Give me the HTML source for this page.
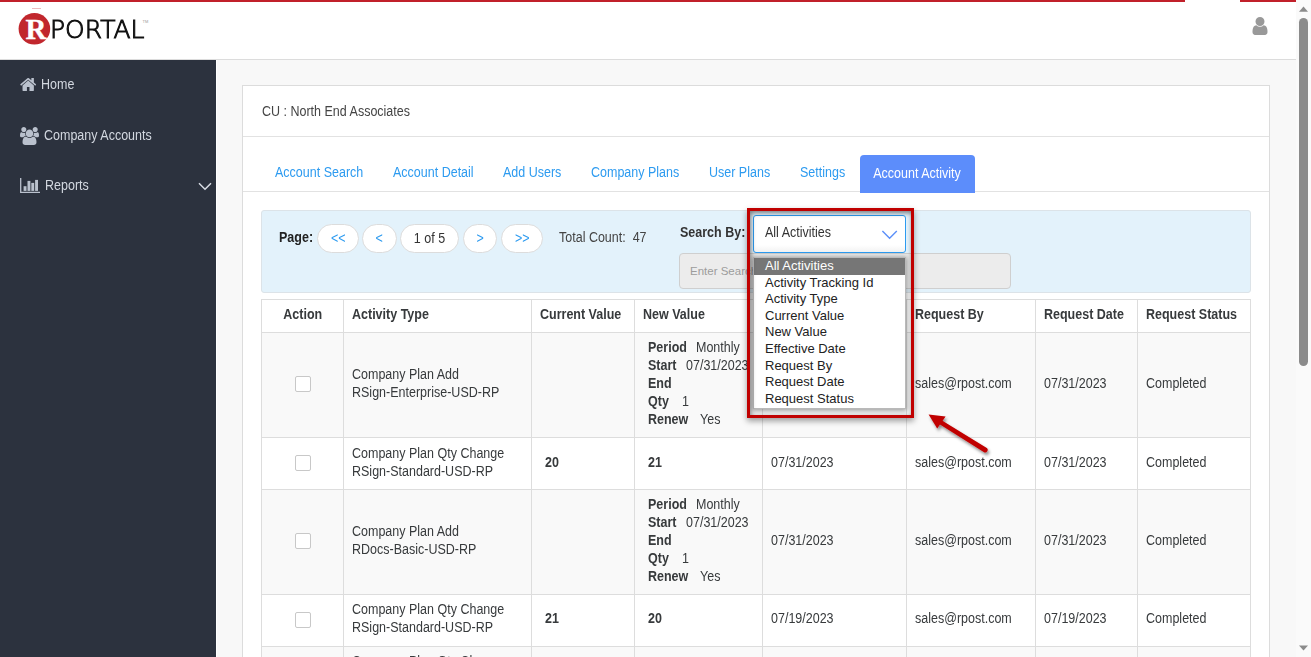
<!DOCTYPE html>
<html lang="en">
<head>
<meta charset="utf-8">
<title>RPortal - Account Activity</title>
<style>
*{box-sizing:border-box;margin:0;padding:0}
html,body{width:1311px;height:657px;overflow:hidden;background:#f8f8f8;font-family:"Liberation Sans",sans-serif;font-size:14px;color:#373a3c}
body{position:relative}
.abs{position:absolute}
.t{display:inline-block;white-space:nowrap;transform:scaleX(.893);transform-origin:0 50%}
.tc{display:inline-block;white-space:nowrap;transform:scaleX(.893);transform-origin:50% 50%}
b,th{font-weight:bold}
#header{left:0;top:0;width:1296px;height:60px;background:#fff;border-bottom:1px solid #dcdcdc}
#redline1{left:0;top:0;width:1185px;height:2px;background:#c1202a}
#redline2{left:1240px;top:0;width:56px;height:2px;background:#c1202a}
#sidebar{left:0;top:60px;width:216px;height:597px;background:#2c323e}
#scroll{left:1296px;top:0;width:15px;height:657px;background:#fafafa}
#thumb{left:1299px;top:18px;width:9px;height:348px;border-radius:5px;background:#8b8b8b}
.nav{position:absolute;height:20px;line-height:20px;color:#d3d8e0;font-size:14px}
#card{left:242px;top:85px;width:1028px;height:600px;background:#fff;border:1px solid #dcdcdc}
#cardtitle{left:262px;top:101px;height:20px;line-height:20px;color:#444}
#titlesep{left:243px;top:136px;width:1026px;height:1px;background:#e2e2e2}
#tabsep{left:243px;top:191px;width:1026px;height:1px;background:#e2e2e2}
.tab{position:absolute;top:162px;height:20px;line-height:20px;color:#2d9bf0}
#activetab{left:860px;top:155px;width:115px;height:38px;background:#5c8dfb;border-radius:4px 4px 0 0;color:#fff;text-align:center;line-height:37px}
#filter{left:261px;top:210px;width:990px;height:83px;background:#e3f2fb;border:1px solid #dce3e8;border-radius:3px}
.pill{position:absolute;top:224px;height:29px;border:1px solid #dcdcdc;border-radius:15px;background:#fff;text-align:center;line-height:26px;color:#2d9bf0}
#search{left:679px;top:253px;width:332px;height:36px;background:#ececec;border:1px solid #cfcfcf;border-radius:4px;color:#9c9c9c;font-size:11.5px;line-height:34px;padding-left:10px}
table{position:absolute;left:261px;top:299px;width:989px;border-collapse:collapse;table-layout:fixed}
th,td{border:1px solid #ddd;padding:0 0 4px 8px;text-align:left;vertical-align:middle;line-height:18px;overflow:hidden}
th{color:#373a3c}
tr.odd td{background:#f9f9f9}
tr.even td{background:#fff}
tr.up td{padding-bottom:6px}
tr.up td.c{padding-bottom:4px}
td.c,th.c{text-align:center;padding:0 0 4px 0}
.cb{display:inline-block;width:16px;height:16px;border:1px solid #c8c8c8;border-radius:2px;background:#fff;vertical-align:middle}
.nv{padding-left:13px}
.nv i{font-style:normal;display:inline-block}
#select{left:753px;top:215px;width:153px;height:38px;background:linear-gradient(#fff 0,#fff 80%,#f3f3f3 100%);border:1px solid #2d9bf0;border-radius:3px;line-height:33px;padding-left:11px;color:#333}
#list{left:753px;top:257px;width:153px;height:152px;background:#fff;border:1px solid #b9b9b9;box-shadow:0 1px 5px 1px rgba(0,0,0,.36);font-size:13px;color:#222}
#list div{height:16.6px;line-height:16.6px;padding-left:11px;white-space:nowrap}
#list div.sel{background:#767676;color:#fff}
#redbox{left:747px;top:208px;width:167px;height:210px;border:3px solid #c00000;box-shadow:0 3px 6px rgba(0,0,0,.38),inset 1px 2px 5px rgba(0,0,0,.5)}
</style>
</head>
<body>
<div class="abs" id="header"></div>
<div class="abs" id="redline1"></div>
<div class="abs" id="redline2"></div>
<div class="abs" style="left:32px;top:8px;width:9px;height:1px;background:#c1202a;opacity:.3"></div>
<div class="abs" id="sidebar"></div>
<div class="abs" style="left:216px;top:60px;width:1px;height:597px;background:#fff"></div>
<div class="abs" id="card"></div>
<div class="abs" id="cardtitle"><span class="t">CU : North End Associates</span></div>
<div class="abs" id="titlesep"></div>
<div class="abs" id="tabsep"></div>
<div class="tab" style="left:275px"><span class="t">Account Search</span></div>
<div class="tab" style="left:393px"><span class="t">Account Detail</span></div>
<div class="tab" style="left:503px"><span class="t">Add Users</span></div>
<div class="tab" style="left:591px"><span class="t">Company Plans</span></div>
<div class="tab" style="left:709px"><span class="t">User Plans</span></div>
<div class="tab" style="left:800px"><span class="t">Settings</span></div>
<div class="abs" id="activetab"><span class="tc">Account Activity</span></div>
<div class="abs" id="filter"></div>
<div class="abs" style="left:279px;top:227px;height:20px;line-height:20px;color:#222"><b class="t">Page:</b></div>
<div class="pill" style="left:317px;width:42px"><span class="tc">&lt;&lt;</span></div>
<div class="pill" style="left:362px;width:35px"><span class="tc">&lt;</span></div>
<div class="pill" style="left:400px;width:59px;color:#333"><span class="tc">1 of 5</span></div>
<div class="pill" style="left:463px;width:34px"><span class="tc">&gt;</span></div>
<div class="pill" style="left:501px;width:42px"><span class="tc">&gt;&gt;</span></div>
<div class="abs" style="left:559px;top:227px;height:20px;line-height:20px;color:#444"><span class="t">Total Count:&nbsp; 47</span></div>
<div class="abs" style="left:680px;top:222px;height:20px;line-height:20px;color:#333"><b class="t">Search By:</b></div>
<div class="abs" id="search">Enter Search...</div>
<table>
<colgroup><col style="width:82px"><col style="width:188px"><col style="width:103px"><col style="width:128px"><col style="width:144px"><col style="width:129px"><col style="width:102px"><col style="width:113px"></colgroup>
<thead><tr style="height:33px"><th class="c"><span class="tc">Action</span></th><th><span class="t">Activity Type</span></th><th><span class="t">Current Value</span></th><th><span class="t">New Value</span></th><th><span class="t">Effective Date</span></th><th><span class="t">Request By</span></th><th><span class="t">Request Date</span></th><th><span class="t">Request Status</span></th></tr></thead>
<tbody>
<tr class="odd" style="height:105px"><td class="c"><span class="cb"></span></td><td><div><span class="t">Company Plan Add</span></div><div><span class="t">RSign-Enterprise-USD-RP</span></div></td><td class="nv"><b class="t"></b></td><td class="nv"><div><b class="t">Period</b><i class="t" style="margin-left:-1px;position:relative;left:5px">Monthly</i></div><div><b class="t">Start</b><i class="t" style="position:relative;left:6px">07/31/2023</i></div><div><b class="t">End</b></div><div><b class="t">Qty</b><i class="t" style="position:relative;left:11px">1</i></div><div><b class="t">Renew</b><i class="t" style="position:relative;left:7px">Yes</i></div></td><td><span class="t">07/31/2023</span></td><td><span class="t">sales@rpost.com</span></td><td><span class="t">07/31/2023</span></td><td><span class="t">Completed</span></td></tr>
<tr class="even" style="height:52px"><td class="c"><span class="cb"></span></td><td><div><span class="t">Company Plan Qty Change</span></div><div><span class="t">RSign-Standard-USD-RP</span></div></td><td class="nv"><b class="t">20</b></td><td class="nv"><b class="t">21</b></td><td><span class="t">07/31/2023</span></td><td><span class="t">sales@rpost.com</span></td><td><span class="t">07/31/2023</span></td><td><span class="t">Completed</span></td></tr>
<tr class="odd" style="height:105px"><td class="c"><span class="cb"></span></td><td><div><span class="t">Company Plan Add</span></div><div><span class="t">RDocs-Basic-USD-RP</span></div></td><td class="nv"><b class="t"></b></td><td class="nv"><div><b class="t">Period</b><i class="t" style="margin-left:-1px;position:relative;left:5px">Monthly</i></div><div><b class="t">Start</b><i class="t" style="position:relative;left:6px">07/31/2023</i></div><div><b class="t">End</b></div><div><b class="t">Qty</b><i class="t" style="position:relative;left:11px">1</i></div><div><b class="t">Renew</b><i class="t" style="position:relative;left:7px">Yes</i></div></td><td><span class="t">07/31/2023</span></td><td><span class="t">sales@rpost.com</span></td><td><span class="t">07/31/2023</span></td><td><span class="t">Completed</span></td></tr>
<tr class="even up" style="height:52px"><td class="c"><span class="cb"></span></td><td><div><span class="t">Company Plan Qty Change</span></div><div><span class="t">RSign-Standard-USD-RP</span></div></td><td class="nv"><b class="t">21</b></td><td class="nv"><b class="t">20</b></td><td><span class="t">07/19/2023</span></td><td><span class="t">sales@rpost.com</span></td><td><span class="t">07/19/2023</span></td><td><span class="t">Completed</span></td></tr>
<tr class="odd" style="height:50px"><td class="c"><span class="cb"></span></td><td><div><span class="t">Company Plan Qty Change</span></div><div><span class="t">RSign-Standard-USD-RP</span></div></td><td class="nv"><b class="t">20</b></td><td class="nv"><b class="t">21</b></td><td><span class="t">07/19/2023</span></td><td><span class="t">sales@rpost.com</span></td><td><span class="t">07/19/2023</span></td><td><span class="t">Completed</span></td></tr>
</tbody></table>
<div class="abs" id="select"><span class="t">All Activities</span></div>
<svg class="abs" style="left:880px;top:228px" width="20" height="14" viewBox="0 0 20 14"><path d="M2.4 3L9.6 10.2L16.8 3" fill="none" stroke="#5b8ff9" stroke-width="1.4"/></svg>
<div class="abs" id="list"><div class="sel">All Activities</div><div>Activity Tracking Id</div><div>Activity Type</div><div>Current Value</div><div>New Value</div><div>Effective Date</div><div>Request By</div><div>Request Date</div><div>Request Status</div></div>
<div class="abs" id="redbox"></div>
<svg class="abs" style="left:915px;top:400px;overflow:visible" width="90" height="70" viewBox="915 400 90 70"><defs><filter id="ash" x="-20%" y="-20%" width="150%" height="150%"><feDropShadow dx="1.5" dy="2.5" stdDeviation="1.6" flood-color="#000" flood-opacity=".45"/></filter></defs><g filter="url(#ash)" fill="#c00000"><polygon points="928.6,414.5 945.6,416.6 937.2,428.6"/><path d="M941.6 420.3L986.4 447.7A2.55 2.55 0 0 1 983.7 452.1L939.6 424.2Z"/></g></svg>
<svg class="abs" style="left:18px;top:12px" width="34" height="34" viewBox="0 0 34 34"><circle cx="16.4" cy="16.8" r="15.8" fill="#c1272d"/></svg>
<div class="abs" style="left:19.5px;top:11px;width:33px;height:36px;line-height:36px;text-align:center;font-family:'Liberation Serif','DejaVu Serif',serif;font-weight:bold;font-size:29px;color:#fff;-webkit-text-stroke:.3px #fff">R</div>
<div class="abs" id="logotext" style="left:49.5px;top:14.4px;height:32px;line-height:32px;font-family:'DejaVu Sans','Liberation Sans',sans-serif;font-weight:200;-webkit-text-stroke:1px #111;font-size:24.7px;color:#111;white-space:nowrap;transform:scaleX(1.01);transform-origin:0 50%">PORTAL</div>
<div class="abs" style="left:142.5px;top:19px;font-size:4px;line-height:6px;color:#999">TM</div>
<svg class="abs" style="left:1252px;top:17px" width="16" height="18" viewBox="0 128 1280 1536"><path fill="#999" d="M1280 1399q0 109-62.500 187t-150.500 78h-854q-88 0-150.500-78t-62.500-187q0-85 8.500-160.500t31.500-152 58.500-131 94-89 134.500-34.500q131 128 313 128t313-128q76 0 134.500 34.500t94 89 58.500 131 31.500 152 8.500 160.500zm-256-887q0 159-112.500 271.500t-271.500 112.500-271.500-112.500-112.500-271.500 112.500-271.500 271.500-112.500 271.500 112.500 112.500 271.500z"/></svg>
<svg class="abs" style="left:20px;top:78.3px" width="16.4" height="13" viewBox="0 256 1664 1280" preserveAspectRatio="none"><path fill="#bac1cd" d="M1408 992v480q0 26-19 45t-45 19h-384v-384h-256v384h-384q-26 0-45-19t-19-45v-480q0-1 .5-3t.5-3l575-474 575 474q1 2 1 6zm223-69l-62 74q-8 9-21 11h-3q-13 0-21-7l-692-577-692 577q-12 8-24 7-13-2-21-11l-62-74q-8-10-7-23.500t11-21.500l719-599q32-26 76-26t76 26l244 204v-195q0-14 9-23t23-9h192q14 0 23 9t9 23v408l219 182q10 8 11 21.500t-7 23.500z"/></svg>
<div class="nav" style="left:41px;top:74px"><span class="t">Home</span></div>
<svg class="abs" style="left:20px;top:127px" width="19" height="18" viewBox="0 0 1920 1792" preserveAspectRatio="none"><path fill="#bac1cd" d="M593 896q-162 5-265 128h-134q-82 0-138-40.500t-56-118.500q0-353 124-353 6 0 43.500 21t97.500 42.500 119 21.500q67 0 133-23-5 37-5 66 0 139 81 256zm1071 637q0 120-73 189.500t-194 69.500h-874q-121 0-194-69.500t-73-189.500q0-53 3.500-103.500t14-109 26.500-108.500 43-97.500 62-81 85.500-53.500 111.500-20q10 0 43 21.500t73 48 107 48 135 21.500 135-21.500 107-48 73-48 43-21.500q61 0 111.500 20t85.500 53.500 62 81 43 97.500 26.500 108.500 14 109 3.500 103.500zm-1024-1277q0 106-75 181t-181 75-181-75-75-181 75-181 181-75 181 75 75 181zm704 384q0 159-112.500 271.500t-271.500 112.500-271.500-112.500-112.500-271.500 112.500-271.500 271.500-112.500 271.500 112.500 112.500 271.500zm576 225q0 78-56 118.500t-138 40.500h-134q-103-123-265-128 81-117 81-256 0-29-5-66 66 23 133 23 59 0 119-21.500t97.500-42.500 43.500-21q124 0 124 353zm-128-609q0 106-75 181t-181 75-181-75-75-181 75-181 181-75 181 75 75 181z"/></svg>
<div class="nav" style="left:44px;top:125px"><span class="t">Company Accounts</span></div>
<svg class="abs" style="left:20px;top:178px" width="21" height="16" viewBox="0 0 21 16"><path d="M0.7 0v14.4H20" fill="none" stroke="#bac1cd" stroke-width="1.3"/><rect x="3.6" y="8.2" width="2.9" height="4.7" fill="#bac1cd"/><rect x="7.5" y="2.9" width="2.9" height="10" fill="#bac1cd"/><rect x="11.3" y="4.9" width="2.9" height="8" fill="#bac1cd"/><rect x="15.1" y="1.9" width="2.9" height="11" fill="#bac1cd"/></svg>
<div class="nav" style="left:45px;top:175px"><span class="t">Reports</span></div>
<svg class="abs" style="left:197px;top:181px" width="16" height="11" viewBox="0 0 16 11"><path d="M2 2.2L8 8.3L14 2.2" fill="none" stroke="#d8dce4" stroke-width="1.5"/></svg>
<div class="abs" id="scroll"></div>
<div class="abs" id="thumb"></div>
<svg class="abs" style="left:1296px;top:0" width="15" height="657" viewBox="0 0 15 657"><polygon points="3,11.8 7.5,6.6 12,11.8" fill="#8b8b8b"/><polygon points="3,645.4 12,645.4 7.5,650.6" fill="#8b8b8b"/></svg>
</body>
</html>
